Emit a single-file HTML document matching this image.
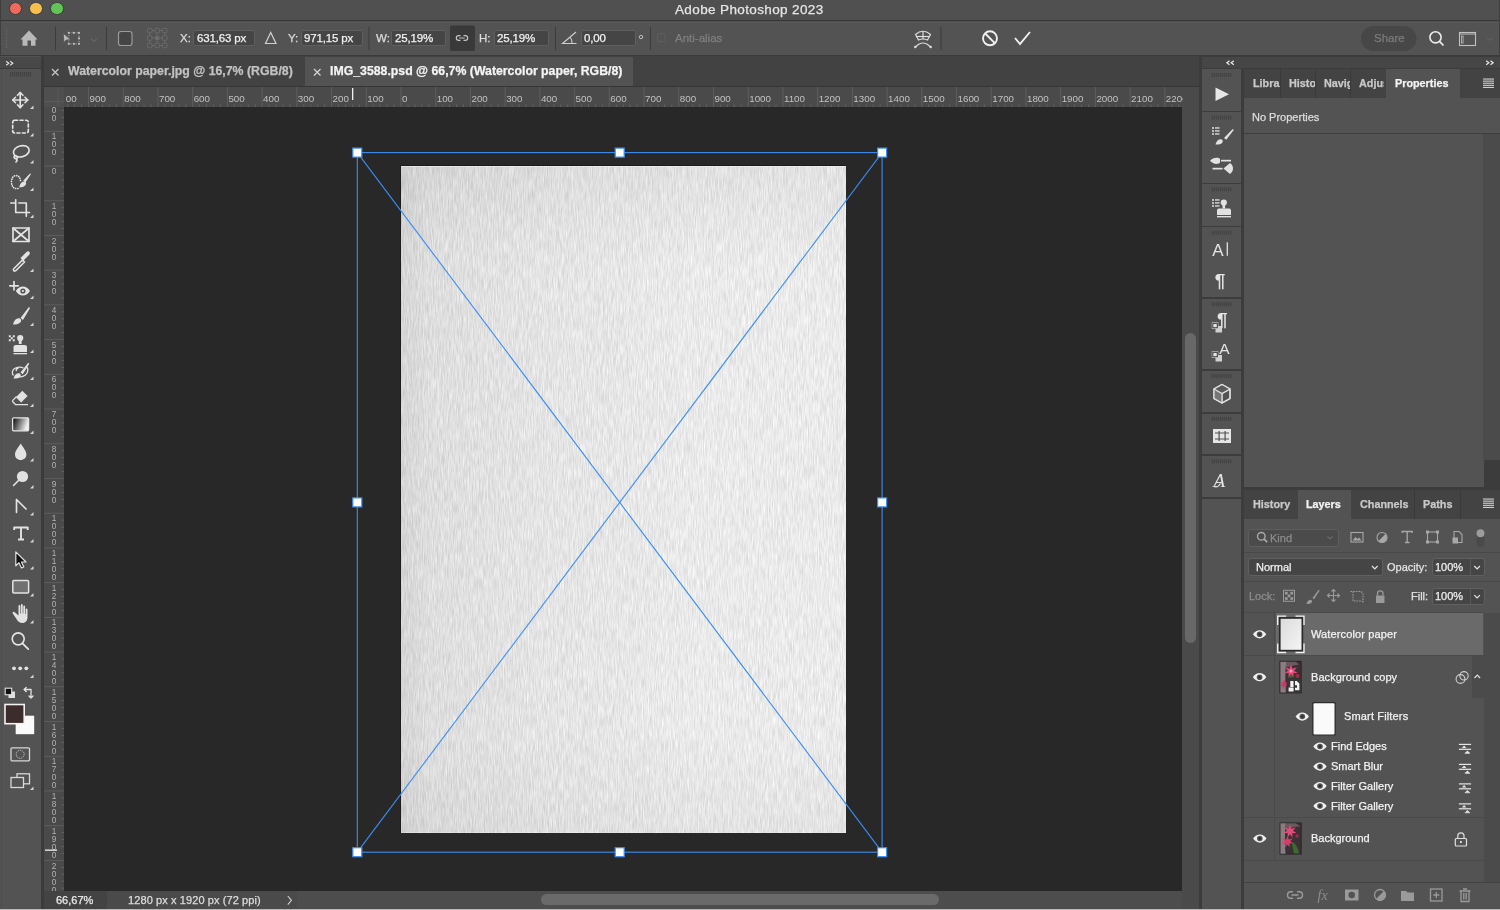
<!DOCTYPE html>
<html><head><meta charset="utf-8">
<style>
*{box-sizing:border-box}
html,body{margin:0;padding:0}
body{width:1500px;height:910px;position:relative;overflow:hidden;background:#535353;font-family:"Liberation Sans",sans-serif;color:#e8e8e8}
.a{position:absolute}
.t{position:absolute;white-space:nowrap;line-height:1;-webkit-text-stroke:0.25px currentColor;will-change:transform}
svg{position:absolute;overflow:visible;will-change:transform}
.inp{position:absolute;background:#454545;border:1px solid #5f5f5f;border-radius:2px}
.sep{position:absolute;width:1px;background:#3e3e3e}
</style></head><body>
<!-- title bar -->
<div class="a" style="left:0;top:0;width:1500px;height:21px;background:#505050;border-bottom:1px solid #353535"></div>
<div class="a" style="left:8.9px;top:1.9px;width:13.6px;height:13.6px;border-radius:50%;background:#ec6a5e;border:0.8px solid #3c3c3c"></div>
<div class="a" style="left:29.4px;top:1.9px;width:13.6px;height:13.6px;border-radius:50%;background:#f4bf4f;border:0.8px solid #3c3c3c"></div>
<div class="a" style="left:50.4px;top:1.9px;width:13.6px;height:13.6px;border-radius:50%;background:#61c554;border:0.8px solid #3c3c3c"></div>
<div class="t" style="left:675px;top:3px;font-size:13.5px;color:#e6e6e6;letter-spacing:0.37px">Adobe Photoshop 2023</div>
<!-- options bar -->
<div class="a" style="left:0;top:21px;width:1500px;height:35px;background:#535353;border-bottom:1px solid #3a3a3a"></div>
<!-- options bar content -->
<div class="a" style="left:0;top:0;width:1px;height:56px;background:#3e3e3e"></div>
<div class="a" style="left:1499px;top:0;width:1px;height:56px;background:#3e3e3e"></div>
<div class="a" style="left:1px;top:22px;width:1498px;height:1px;background:#585858"></div>
<svg style="left:0;top:21px" width="1500" height="35" viewBox="0 21 1500 35">
 <g fill="#5e5e5e"><rect x="5.5" y="28" width="2" height="20"/></g>
 <g stroke="#4a4a4a" stroke-width="0.6"><line x1="5" y1="30" x2="8" y2="30"/><line x1="5" y1="33" x2="8" y2="33"/><line x1="5" y1="36" x2="8" y2="36"/><line x1="5" y1="39" x2="8" y2="39"/><line x1="5" y1="42" x2="8" y2="42"/><line x1="5" y1="45" x2="8" y2="45"/></g>
 <!-- home -->
 <path d="M29 30.5 L20.5 39.5 L22.5 39.5 L22.5 45.8 L27.5 45.8 L27.5 40.5 L31 40.5 L31 45.8 L35.5 45.8 L35.5 39.5 L37.5 39.5 Z" fill="#b9b9b9"/>
 <rect x="55" y="26.5" width="1" height="24" fill="#3c3c3c"/>
 <!-- marquee transform icon -->
 <rect x="68.8" y="32.8" width="10.2" height="11" fill="none" stroke="#a8a8a8" stroke-width="0.9" stroke-dasharray="1.3 1.3"/>
 <g fill="#c0c0c0"><circle cx="68.8" cy="32.8" r="1.1"/><circle cx="73.9" cy="32.8" r="1.1"/><circle cx="79" cy="32.8" r="1.1"/><circle cx="79" cy="38.3" r="1.1"/><circle cx="68.8" cy="43.8" r="1.1"/><circle cx="73.9" cy="43.8" r="1.1"/><circle cx="79" cy="43.8" r="1.1"/></g>
 <path d="M63.3 33.3 L63.8 42.5 L66.3 40 L70.8 39.8 Z" fill="#b8b8b8" stroke="#535353" stroke-width="0.8"/>
 <path d="M91 38.5 L94 41.5 L97 38.5" fill="none" stroke="#727272" stroke-width="1"/>
 <rect x="106" y="26.5" width="1" height="24" fill="#3c3c3c"/>
 <!-- checkbox -->
 <rect x="118.5" y="31.5" width="13.5" height="14" rx="2.5" fill="#454545" stroke="#9a9a9a" stroke-width="1.2"/>
 <!-- reference grid -->
 <g fill="none" stroke="#6a6a6a" stroke-width="1">
  <path d="M152 30.5h3M159.5 30.5h3M152 38h3M159.5 38h3M152 45.5h3M159.5 45.5h3M149.7 33v2.5M149.7 40.5v2.5M157.2 33v2.5M157.2 40.5v2.5M164.7 33v2.5M164.7 40.5v2.5"/>
  <rect x="147.5" y="28.3" width="4.5" height="4.5" rx="1"/><rect x="155" y="28.3" width="4.5" height="4.5" rx="1"/><rect x="162.5" y="28.3" width="4.5" height="4.5" rx="1"/>
  <rect x="147.5" y="35.8" width="4.5" height="4.5" rx="1"/><rect x="162.5" y="35.8" width="4.5" height="4.5" rx="1"/>
  <rect x="147.5" y="43.3" width="4.5" height="4.5" rx="1"/><rect x="155" y="43.3" width="4.5" height="4.5" rx="1"/><rect x="162.5" y="43.3" width="4.5" height="4.5" rx="1"/>
 </g>
 <rect x="155" y="35.8" width="4.5" height="4.5" rx="1" fill="#6a6a6a"/>
 <!-- triangle delta -->
 <path d="M270.7 32.5 L265.5 43.5 L276 43.5 Z" fill="none" stroke="#d0d0d0" stroke-width="1.2"/>
 <rect x="368.5" y="27" width="1" height="23" fill="#3c3c3c"/>
 <!-- link button -->
 <rect x="450" y="25.5" width="25" height="25.5" rx="1.5" fill="#393939"/>
 <path d="M460.5 35.6h-1.8a2.4 2.4 0 0 0 0 4.8h1.8M463.5 35.6h1.8a2.4 2.4 0 0 1 0 4.8h-1.8M459.3 38h5.4" fill="none" stroke="#c4c4c4" stroke-width="1.2"/>
 <rect x="555" y="27" width="1" height="23" fill="#3c3c3c"/>
 <!-- angle icon -->
 <path d="M576 32 L562.5 43.5 L576.5 43.5 M570 37 Q572.5 40 572 43.5" fill="none" stroke="#cfcfcf" stroke-width="1.1"/>
 <circle cx="641" cy="37" r="1.7" fill="none" stroke="#bdbdbd" stroke-width="1"/>
 <rect x="650" y="27" width="1" height="23" fill="#3c3c3c"/>
 <rect x="657.5" y="33.5" width="7.5" height="8" rx="1.5" fill="none" stroke="#5f5f5f" stroke-width="1"/>
 <!-- warp icon -->
 <g fill="none" stroke="#dedede" stroke-width="1.2">
  <path d="M915.5 34.5 Q923 28 930.5 34.5 L927.5 40 Q923 38 918.5 40 Z"/>
  <line x1="923" y1="31.5" x2="923" y2="39"/><line x1="916.5" y1="36.5" x2="929.5" y2="36.5"/>
  <path d="M915.5 47 Q923 39 930.5 47"/>
 </g>
 <circle cx="915.3" cy="47" r="1.2" fill="#dedede"/><circle cx="930.7" cy="47" r="1.2" fill="#dedede"/>
 <rect x="940.5" y="27" width="1" height="23" fill="#3c3c3c"/>
 <!-- cancel -->
 <circle cx="990" cy="38.3" r="7" fill="none" stroke="#f0f0f0" stroke-width="1.9"/>
 <line x1="985.2" y1="33.5" x2="994.8" y2="43.1" stroke="#f0f0f0" stroke-width="1.9"/>
 <!-- commit -->
 <path d="M1015 38 L1020 44 L1030 32" fill="none" stroke="#f0f0f0" stroke-width="1.9"/>
 <!-- share -->
 <rect x="1361" y="26" width="55.5" height="25" rx="12.5" fill="#474747"/>
 <!-- search -->
 <circle cx="1435.5" cy="37.3" r="5.6" fill="none" stroke="#ececec" stroke-width="1.6"/>
 <line x1="1439.5" y1="41.3" x2="1443.5" y2="45.5" stroke="#ececec" stroke-width="1.8"/>
 <!-- workspace -->
 <rect x="1459.5" y="32.5" width="16" height="13" fill="none" stroke="#c0c0c0" stroke-width="1.1"/>
 <line x1="1459.5" y1="34" x2="1475.5" y2="34" stroke="#c0c0c0" stroke-width="1"/>
 <rect x="1461.5" y="36" width="1.6" height="7" fill="none" stroke="#c0c0c0" stroke-width="0.8"/>
 <path d="M1487 37.5 L1490 40.5 L1493 37.5" fill="none" stroke="#686868" stroke-width="1"/>
</svg>
<div class="inp" style="left:193px;top:30px;width:62px;height:16px"></div>
<div class="inp" style="left:300.5px;top:30px;width:62px;height:16px"></div>
<div class="inp" style="left:391px;top:30px;width:54.5px;height:16px"></div>
<div class="inp" style="left:493.5px;top:30px;width:55px;height:16px"></div>
<div class="inp" style="left:580.5px;top:30px;width:55px;height:16px"></div>
<div class="t" style="left:179.5px;top:33px;font-size:11.5px;color:#dcdcdc">X:</div>
<div class="t" style="left:196.5px;top:33px;font-size:11.5px;color:#f2f2f2;letter-spacing:-0.15px">631,63 px</div>
<div class="t" style="left:287.5px;top:33px;font-size:11.5px;color:#dcdcdc">Y:</div>
<div class="t" style="left:303.5px;top:33px;font-size:11.5px;color:#f2f2f2;letter-spacing:-0.15px">971,15 px</div>
<div class="t" style="left:375.5px;top:33px;font-size:11.5px;color:#dcdcdc">W:</div>
<div class="t" style="left:394.5px;top:33px;font-size:11.5px;color:#f2f2f2;letter-spacing:-0.15px">25,19%</div>
<div class="t" style="left:479px;top:33px;font-size:11.5px;color:#dcdcdc">H:</div>
<div class="t" style="left:497px;top:33px;font-size:11.5px;color:#f2f2f2;letter-spacing:-0.15px">25,19%</div>
<div class="t" style="left:584px;top:33px;font-size:11.5px;color:#f2f2f2;letter-spacing:-0.15px">0,00</div>
<div class="t" style="left:675px;top:33px;font-size:11.5px;color:#7f7f7f">Anti-alias</div>
<div class="t" style="left:1374px;top:33px;font-size:11.5px;color:#7b7b7b">Share</div>
<!-- left toolbar -->
<div class="a" style="left:0;top:56px;width:40.5px;height:854px;background:#535353"></div>
<div class="a" style="left:0;top:57px;width:40.5px;height:11.5px;background:#484848;border-bottom:1px solid #3c3c3c"></div>
<div class="a" style="left:40.5px;top:56px;width:3.2px;height:854px;background:#3b3b3b"></div>
<!-- tab bar -->
<div class="a" style="left:43.5px;top:56px;width:1156px;height:30.5px;background:#424242;border-bottom:1px solid #363636"></div>
<div class="a" style="left:305px;top:57px;width:328px;height:29px;background:#535353"></div>
<svg style="left:51px;top:67.5px" width="10" height="10"><path d="M1 1L7.5 7.5M7.5 1L1 7.5" stroke="#c4c4c4" stroke-width="1.25"/></svg>
<div class="t" style="left:68px;top:65px;font-size:12.3px;font-weight:bold;color:#c2c2c2">Watercolor paper.jpg @ 16,7% (RGB/8)</div>
<svg style="left:313px;top:67.5px" width="10" height="10"><path d="M1 1L7.5 7.5M7.5 1L1 7.5" stroke="#d4d4d4" stroke-width="1.25"/></svg>
<div class="t" style="left:330px;top:65px;font-size:12.3px;font-weight:bold;color:#f4f4f4">IMG_3588.psd @ 66,7% (Watercolor paper, RGB/8)</div>
<!-- rulers -->
<div class="a" style="left:43.5px;top:86.5px;width:1156px;height:20px;background:#4a4a4a"></div>
<div class="a" style="left:43.5px;top:106.5px;width:20px;height:785px;background:#4a4a4a"></div>
<svg style="left:63.5px;top:86.5px;overflow:hidden" width="1119" height="20"><g font-family="Liberation Sans" font-size="9.8" fill="#c2c2c2"><rect x="-10.70" y="0" width="1" height="20" fill="#5e5e5e"/><text x="1.70" y="15.1">00</text><rect x="24.02" y="0" width="1" height="20" fill="#5e5e5e"/><text x="25.52" y="15.1">900</text><rect x="58.74" y="0" width="1" height="20" fill="#5e5e5e"/><text x="60.24" y="15.1">800</text><rect x="93.46" y="0" width="1" height="20" fill="#5e5e5e"/><text x="94.96" y="15.1">700</text><rect x="128.18" y="0" width="1" height="20" fill="#5e5e5e"/><text x="129.68" y="15.1">600</text><rect x="162.90" y="0" width="1" height="20" fill="#5e5e5e"/><text x="164.40" y="15.1">500</text><rect x="197.62" y="0" width="1" height="20" fill="#5e5e5e"/><text x="199.12" y="15.1">400</text><rect x="232.34" y="0" width="1" height="20" fill="#5e5e5e"/><text x="233.84" y="15.1">300</text><rect x="267.06" y="0" width="1" height="20" fill="#5e5e5e"/><text x="268.56" y="15.1">200</text><rect x="301.78" y="0" width="1" height="20" fill="#5e5e5e"/><text x="303.28" y="15.1">100</text><rect x="336.50" y="0" width="1" height="20" fill="#5e5e5e"/><text x="338.00" y="15.1">0</text><rect x="371.22" y="0" width="1" height="20" fill="#5e5e5e"/><text x="372.72" y="15.1">100</text><rect x="405.94" y="0" width="1" height="20" fill="#5e5e5e"/><text x="407.44" y="15.1">200</text><rect x="440.66" y="0" width="1" height="20" fill="#5e5e5e"/><text x="442.16" y="15.1">300</text><rect x="475.38" y="0" width="1" height="20" fill="#5e5e5e"/><text x="476.88" y="15.1">400</text><rect x="510.10" y="0" width="1" height="20" fill="#5e5e5e"/><text x="511.60" y="15.1">500</text><rect x="544.82" y="0" width="1" height="20" fill="#5e5e5e"/><text x="546.32" y="15.1">600</text><rect x="579.54" y="0" width="1" height="20" fill="#5e5e5e"/><text x="581.04" y="15.1">700</text><rect x="614.26" y="0" width="1" height="20" fill="#5e5e5e"/><text x="615.76" y="15.1">800</text><rect x="648.98" y="0" width="1" height="20" fill="#5e5e5e"/><text x="650.48" y="15.1">900</text><rect x="683.70" y="0" width="1" height="20" fill="#5e5e5e"/><text x="685.20" y="15.1">1000</text><rect x="718.42" y="0" width="1" height="20" fill="#5e5e5e"/><text x="719.92" y="15.1">1100</text><rect x="753.14" y="0" width="1" height="20" fill="#5e5e5e"/><text x="754.64" y="15.1">1200</text><rect x="787.86" y="0" width="1" height="20" fill="#5e5e5e"/><text x="789.36" y="15.1">1300</text><rect x="822.58" y="0" width="1" height="20" fill="#5e5e5e"/><text x="824.08" y="15.1">1400</text><rect x="857.30" y="0" width="1" height="20" fill="#5e5e5e"/><text x="858.80" y="15.1">1500</text><rect x="892.02" y="0" width="1" height="20" fill="#5e5e5e"/><text x="893.52" y="15.1">1600</text><rect x="926.74" y="0" width="1" height="20" fill="#5e5e5e"/><text x="928.24" y="15.1">1700</text><rect x="961.46" y="0" width="1" height="20" fill="#5e5e5e"/><text x="962.96" y="15.1">1800</text><rect x="996.18" y="0" width="1" height="20" fill="#5e5e5e"/><text x="997.68" y="15.1">1900</text><rect x="1030.90" y="0" width="1" height="20" fill="#5e5e5e"/><text x="1032.40" y="15.1">2000</text><rect x="1065.62" y="0" width="1" height="20" fill="#5e5e5e"/><text x="1067.12" y="15.1">2100</text><rect x="1100.34" y="0" width="1" height="20" fill="#5e5e5e"/><text x="1101.84" y="15.1">2200</text><rect x="3.19" y="17.5" width="1" height="2.5" fill="#636363"/><rect x="10.13" y="17.5" width="1" height="2.5" fill="#636363"/><rect x="17.08" y="17.5" width="1" height="2.5" fill="#636363"/><rect x="30.96" y="17.5" width="1" height="2.5" fill="#636363"/><rect x="37.91" y="17.5" width="1" height="2.5" fill="#636363"/><rect x="44.85" y="17.5" width="1" height="2.5" fill="#636363"/><rect x="51.80" y="17.5" width="1" height="2.5" fill="#636363"/><rect x="65.68" y="17.5" width="1" height="2.5" fill="#636363"/><rect x="72.63" y="17.5" width="1" height="2.5" fill="#636363"/><rect x="79.57" y="17.5" width="1" height="2.5" fill="#636363"/><rect x="86.52" y="17.5" width="1" height="2.5" fill="#636363"/><rect x="100.40" y="17.5" width="1" height="2.5" fill="#636363"/><rect x="107.35" y="17.5" width="1" height="2.5" fill="#636363"/><rect x="114.29" y="17.5" width="1" height="2.5" fill="#636363"/><rect x="121.24" y="17.5" width="1" height="2.5" fill="#636363"/><rect x="135.12" y="17.5" width="1" height="2.5" fill="#636363"/><rect x="142.07" y="17.5" width="1" height="2.5" fill="#636363"/><rect x="149.01" y="17.5" width="1" height="2.5" fill="#636363"/><rect x="155.96" y="17.5" width="1" height="2.5" fill="#636363"/><rect x="169.84" y="17.5" width="1" height="2.5" fill="#636363"/><rect x="176.79" y="17.5" width="1" height="2.5" fill="#636363"/><rect x="183.73" y="17.5" width="1" height="2.5" fill="#636363"/><rect x="190.68" y="17.5" width="1" height="2.5" fill="#636363"/><rect x="204.56" y="17.5" width="1" height="2.5" fill="#636363"/><rect x="211.51" y="17.5" width="1" height="2.5" fill="#636363"/><rect x="218.45" y="17.5" width="1" height="2.5" fill="#636363"/><rect x="225.40" y="17.5" width="1" height="2.5" fill="#636363"/><rect x="239.28" y="17.5" width="1" height="2.5" fill="#636363"/><rect x="246.23" y="17.5" width="1" height="2.5" fill="#636363"/><rect x="253.17" y="17.5" width="1" height="2.5" fill="#636363"/><rect x="260.12" y="17.5" width="1" height="2.5" fill="#636363"/><rect x="274.00" y="17.5" width="1" height="2.5" fill="#636363"/><rect x="280.95" y="17.5" width="1" height="2.5" fill="#636363"/><rect x="287.89" y="17.5" width="1" height="2.5" fill="#636363"/><rect x="294.84" y="17.5" width="1" height="2.5" fill="#636363"/><rect x="308.72" y="17.5" width="1" height="2.5" fill="#636363"/><rect x="315.67" y="17.5" width="1" height="2.5" fill="#636363"/><rect x="322.61" y="17.5" width="1" height="2.5" fill="#636363"/><rect x="329.56" y="17.5" width="1" height="2.5" fill="#636363"/><rect x="343.44" y="17.5" width="1" height="2.5" fill="#636363"/><rect x="350.39" y="17.5" width="1" height="2.5" fill="#636363"/><rect x="357.33" y="17.5" width="1" height="2.5" fill="#636363"/><rect x="364.28" y="17.5" width="1" height="2.5" fill="#636363"/><rect x="378.16" y="17.5" width="1" height="2.5" fill="#636363"/><rect x="385.11" y="17.5" width="1" height="2.5" fill="#636363"/><rect x="392.05" y="17.5" width="1" height="2.5" fill="#636363"/><rect x="399.00" y="17.5" width="1" height="2.5" fill="#636363"/><rect x="412.88" y="17.5" width="1" height="2.5" fill="#636363"/><rect x="419.83" y="17.5" width="1" height="2.5" fill="#636363"/><rect x="426.77" y="17.5" width="1" height="2.5" fill="#636363"/><rect x="433.72" y="17.5" width="1" height="2.5" fill="#636363"/><rect x="447.60" y="17.5" width="1" height="2.5" fill="#636363"/><rect x="454.55" y="17.5" width="1" height="2.5" fill="#636363"/><rect x="461.49" y="17.5" width="1" height="2.5" fill="#636363"/><rect x="468.44" y="17.5" width="1" height="2.5" fill="#636363"/><rect x="482.32" y="17.5" width="1" height="2.5" fill="#636363"/><rect x="489.27" y="17.5" width="1" height="2.5" fill="#636363"/><rect x="496.21" y="17.5" width="1" height="2.5" fill="#636363"/><rect x="503.16" y="17.5" width="1" height="2.5" fill="#636363"/><rect x="517.04" y="17.5" width="1" height="2.5" fill="#636363"/><rect x="523.99" y="17.5" width="1" height="2.5" fill="#636363"/><rect x="530.93" y="17.5" width="1" height="2.5" fill="#636363"/><rect x="537.88" y="17.5" width="1" height="2.5" fill="#636363"/><rect x="551.76" y="17.5" width="1" height="2.5" fill="#636363"/><rect x="558.71" y="17.5" width="1" height="2.5" fill="#636363"/><rect x="565.65" y="17.5" width="1" height="2.5" fill="#636363"/><rect x="572.60" y="17.5" width="1" height="2.5" fill="#636363"/><rect x="586.48" y="17.5" width="1" height="2.5" fill="#636363"/><rect x="593.43" y="17.5" width="1" height="2.5" fill="#636363"/><rect x="600.37" y="17.5" width="1" height="2.5" fill="#636363"/><rect x="607.32" y="17.5" width="1" height="2.5" fill="#636363"/><rect x="621.20" y="17.5" width="1" height="2.5" fill="#636363"/><rect x="628.15" y="17.5" width="1" height="2.5" fill="#636363"/><rect x="635.09" y="17.5" width="1" height="2.5" fill="#636363"/><rect x="642.04" y="17.5" width="1" height="2.5" fill="#636363"/><rect x="655.92" y="17.5" width="1" height="2.5" fill="#636363"/><rect x="662.87" y="17.5" width="1" height="2.5" fill="#636363"/><rect x="669.81" y="17.5" width="1" height="2.5" fill="#636363"/><rect x="676.76" y="17.5" width="1" height="2.5" fill="#636363"/><rect x="690.64" y="17.5" width="1" height="2.5" fill="#636363"/><rect x="697.59" y="17.5" width="1" height="2.5" fill="#636363"/><rect x="704.53" y="17.5" width="1" height="2.5" fill="#636363"/><rect x="711.48" y="17.5" width="1" height="2.5" fill="#636363"/><rect x="725.36" y="17.5" width="1" height="2.5" fill="#636363"/><rect x="732.31" y="17.5" width="1" height="2.5" fill="#636363"/><rect x="739.25" y="17.5" width="1" height="2.5" fill="#636363"/><rect x="746.20" y="17.5" width="1" height="2.5" fill="#636363"/><rect x="760.08" y="17.5" width="1" height="2.5" fill="#636363"/><rect x="767.03" y="17.5" width="1" height="2.5" fill="#636363"/><rect x="773.97" y="17.5" width="1" height="2.5" fill="#636363"/><rect x="780.92" y="17.5" width="1" height="2.5" fill="#636363"/><rect x="794.80" y="17.5" width="1" height="2.5" fill="#636363"/><rect x="801.75" y="17.5" width="1" height="2.5" fill="#636363"/><rect x="808.69" y="17.5" width="1" height="2.5" fill="#636363"/><rect x="815.64" y="17.5" width="1" height="2.5" fill="#636363"/><rect x="829.52" y="17.5" width="1" height="2.5" fill="#636363"/><rect x="836.47" y="17.5" width="1" height="2.5" fill="#636363"/><rect x="843.41" y="17.5" width="1" height="2.5" fill="#636363"/><rect x="850.36" y="17.5" width="1" height="2.5" fill="#636363"/><rect x="864.24" y="17.5" width="1" height="2.5" fill="#636363"/><rect x="871.19" y="17.5" width="1" height="2.5" fill="#636363"/><rect x="878.13" y="17.5" width="1" height="2.5" fill="#636363"/><rect x="885.08" y="17.5" width="1" height="2.5" fill="#636363"/><rect x="898.96" y="17.5" width="1" height="2.5" fill="#636363"/><rect x="905.91" y="17.5" width="1" height="2.5" fill="#636363"/><rect x="912.85" y="17.5" width="1" height="2.5" fill="#636363"/><rect x="919.80" y="17.5" width="1" height="2.5" fill="#636363"/><rect x="933.68" y="17.5" width="1" height="2.5" fill="#636363"/><rect x="940.63" y="17.5" width="1" height="2.5" fill="#636363"/><rect x="947.57" y="17.5" width="1" height="2.5" fill="#636363"/><rect x="954.52" y="17.5" width="1" height="2.5" fill="#636363"/><rect x="968.40" y="17.5" width="1" height="2.5" fill="#636363"/><rect x="975.35" y="17.5" width="1" height="2.5" fill="#636363"/><rect x="982.29" y="17.5" width="1" height="2.5" fill="#636363"/><rect x="989.24" y="17.5" width="1" height="2.5" fill="#636363"/><rect x="1003.12" y="17.5" width="1" height="2.5" fill="#636363"/><rect x="1010.07" y="17.5" width="1" height="2.5" fill="#636363"/><rect x="1017.01" y="17.5" width="1" height="2.5" fill="#636363"/><rect x="1023.96" y="17.5" width="1" height="2.5" fill="#636363"/><rect x="1037.84" y="17.5" width="1" height="2.5" fill="#636363"/><rect x="1044.79" y="17.5" width="1" height="2.5" fill="#636363"/><rect x="1051.73" y="17.5" width="1" height="2.5" fill="#636363"/><rect x="1058.68" y="17.5" width="1" height="2.5" fill="#636363"/><rect x="1072.56" y="17.5" width="1" height="2.5" fill="#636363"/><rect x="1079.51" y="17.5" width="1" height="2.5" fill="#636363"/><rect x="1086.45" y="17.5" width="1" height="2.5" fill="#636363"/><rect x="1093.40" y="17.5" width="1" height="2.5" fill="#636363"/><rect x="1107.28" y="17.5" width="1" height="2.5" fill="#636363"/><rect x="1114.23" y="17.5" width="1" height="2.5" fill="#636363"/></g></svg>
<svg style="left:43.5px;top:106.5px;overflow:hidden" width="20" height="785"><g font-family="Liberation Sans" font-size="8.2" fill="#b4b4b4" text-anchor="middle"><rect x="0" y="-45.66" width="20" height="1" fill="#5e5e5e"/><text x="10" y="-37.06">3</text><text x="10" y="-29.06">0</text><text x="10" y="-21.06">0</text><rect x="0" y="-10.94" width="20" height="1" fill="#5e5e5e"/><text x="10" y="-2.34">2</text><text x="10" y="5.66">0</text><text x="10" y="13.66">0</text><rect x="0" y="23.78" width="20" height="1" fill="#5e5e5e"/><text x="10" y="32.38">1</text><text x="10" y="40.38">0</text><text x="10" y="48.38">0</text><rect x="0" y="58.50" width="20" height="1" fill="#5e5e5e"/><text x="10" y="67.10">0</text><rect x="0" y="93.22" width="20" height="1" fill="#5e5e5e"/><text x="10" y="101.82">1</text><text x="10" y="109.82">0</text><text x="10" y="117.82">0</text><rect x="0" y="127.94" width="20" height="1" fill="#5e5e5e"/><text x="10" y="136.54">2</text><text x="10" y="144.54">0</text><text x="10" y="152.54">0</text><rect x="0" y="162.66" width="20" height="1" fill="#5e5e5e"/><text x="10" y="171.26">3</text><text x="10" y="179.26">0</text><text x="10" y="187.26">0</text><rect x="0" y="197.38" width="20" height="1" fill="#5e5e5e"/><text x="10" y="205.98">4</text><text x="10" y="213.98">0</text><text x="10" y="221.98">0</text><rect x="0" y="232.10" width="20" height="1" fill="#5e5e5e"/><text x="10" y="240.70">5</text><text x="10" y="248.70">0</text><text x="10" y="256.70">0</text><rect x="0" y="266.82" width="20" height="1" fill="#5e5e5e"/><text x="10" y="275.42">6</text><text x="10" y="283.42">0</text><text x="10" y="291.42">0</text><rect x="0" y="301.54" width="20" height="1" fill="#5e5e5e"/><text x="10" y="310.14">7</text><text x="10" y="318.14">0</text><text x="10" y="326.14">0</text><rect x="0" y="336.26" width="20" height="1" fill="#5e5e5e"/><text x="10" y="344.86">8</text><text x="10" y="352.86">0</text><text x="10" y="360.86">0</text><rect x="0" y="370.98" width="20" height="1" fill="#5e5e5e"/><text x="10" y="379.58">9</text><text x="10" y="387.58">0</text><text x="10" y="395.58">0</text><rect x="0" y="405.70" width="20" height="1" fill="#5e5e5e"/><text x="10" y="414.30">1</text><text x="10" y="422.30">0</text><text x="10" y="430.30">0</text><text x="10" y="438.30">0</text><rect x="0" y="440.42" width="20" height="1" fill="#5e5e5e"/><text x="10" y="449.02">1</text><text x="10" y="457.02">1</text><text x="10" y="465.02">0</text><text x="10" y="473.02">0</text><rect x="0" y="475.14" width="20" height="1" fill="#5e5e5e"/><text x="10" y="483.74">1</text><text x="10" y="491.74">2</text><text x="10" y="499.74">0</text><text x="10" y="507.74">0</text><rect x="0" y="509.86" width="20" height="1" fill="#5e5e5e"/><text x="10" y="518.46">1</text><text x="10" y="526.46">3</text><text x="10" y="534.46">0</text><text x="10" y="542.46">0</text><rect x="0" y="544.58" width="20" height="1" fill="#5e5e5e"/><text x="10" y="553.18">1</text><text x="10" y="561.18">4</text><text x="10" y="569.18">0</text><text x="10" y="577.18">0</text><rect x="0" y="579.30" width="20" height="1" fill="#5e5e5e"/><text x="10" y="587.90">1</text><text x="10" y="595.90">5</text><text x="10" y="603.90">0</text><text x="10" y="611.90">0</text><rect x="0" y="614.02" width="20" height="1" fill="#5e5e5e"/><text x="10" y="622.62">1</text><text x="10" y="630.62">6</text><text x="10" y="638.62">0</text><text x="10" y="646.62">0</text><rect x="0" y="648.74" width="20" height="1" fill="#5e5e5e"/><text x="10" y="657.34">1</text><text x="10" y="665.34">7</text><text x="10" y="673.34">0</text><text x="10" y="681.34">0</text><rect x="0" y="683.46" width="20" height="1" fill="#5e5e5e"/><text x="10" y="692.06">1</text><text x="10" y="700.06">8</text><text x="10" y="708.06">0</text><text x="10" y="716.06">0</text><rect x="0" y="718.18" width="20" height="1" fill="#5e5e5e"/><text x="10" y="726.78">1</text><text x="10" y="734.78">9</text><text x="10" y="742.78">0</text><text x="10" y="750.78">0</text><rect x="0" y="752.90" width="20" height="1" fill="#5e5e5e"/><text x="10" y="761.50">2</text><text x="10" y="769.50">0</text><text x="10" y="777.50">0</text><text x="10" y="785.50">0</text><rect x="17.5" y="2.95" width="2.5" height="1" fill="#636363"/><rect x="17.5" y="9.89" width="2.5" height="1" fill="#636363"/><rect x="17.5" y="16.84" width="2.5" height="1" fill="#636363"/><rect x="17.5" y="30.72" width="2.5" height="1" fill="#636363"/><rect x="17.5" y="37.67" width="2.5" height="1" fill="#636363"/><rect x="17.5" y="44.61" width="2.5" height="1" fill="#636363"/><rect x="17.5" y="51.56" width="2.5" height="1" fill="#636363"/><rect x="17.5" y="65.44" width="2.5" height="1" fill="#636363"/><rect x="17.5" y="72.39" width="2.5" height="1" fill="#636363"/><rect x="17.5" y="79.33" width="2.5" height="1" fill="#636363"/><rect x="17.5" y="86.28" width="2.5" height="1" fill="#636363"/><rect x="17.5" y="100.16" width="2.5" height="1" fill="#636363"/><rect x="17.5" y="107.11" width="2.5" height="1" fill="#636363"/><rect x="17.5" y="114.05" width="2.5" height="1" fill="#636363"/><rect x="17.5" y="121.00" width="2.5" height="1" fill="#636363"/><rect x="17.5" y="134.88" width="2.5" height="1" fill="#636363"/><rect x="17.5" y="141.83" width="2.5" height="1" fill="#636363"/><rect x="17.5" y="148.77" width="2.5" height="1" fill="#636363"/><rect x="17.5" y="155.72" width="2.5" height="1" fill="#636363"/><rect x="17.5" y="169.60" width="2.5" height="1" fill="#636363"/><rect x="17.5" y="176.55" width="2.5" height="1" fill="#636363"/><rect x="17.5" y="183.49" width="2.5" height="1" fill="#636363"/><rect x="17.5" y="190.44" width="2.5" height="1" fill="#636363"/><rect x="17.5" y="204.32" width="2.5" height="1" fill="#636363"/><rect x="17.5" y="211.27" width="2.5" height="1" fill="#636363"/><rect x="17.5" y="218.21" width="2.5" height="1" fill="#636363"/><rect x="17.5" y="225.16" width="2.5" height="1" fill="#636363"/><rect x="17.5" y="239.04" width="2.5" height="1" fill="#636363"/><rect x="17.5" y="245.99" width="2.5" height="1" fill="#636363"/><rect x="17.5" y="252.93" width="2.5" height="1" fill="#636363"/><rect x="17.5" y="259.88" width="2.5" height="1" fill="#636363"/><rect x="17.5" y="273.76" width="2.5" height="1" fill="#636363"/><rect x="17.5" y="280.71" width="2.5" height="1" fill="#636363"/><rect x="17.5" y="287.65" width="2.5" height="1" fill="#636363"/><rect x="17.5" y="294.60" width="2.5" height="1" fill="#636363"/><rect x="17.5" y="308.48" width="2.5" height="1" fill="#636363"/><rect x="17.5" y="315.43" width="2.5" height="1" fill="#636363"/><rect x="17.5" y="322.37" width="2.5" height="1" fill="#636363"/><rect x="17.5" y="329.32" width="2.5" height="1" fill="#636363"/><rect x="17.5" y="343.20" width="2.5" height="1" fill="#636363"/><rect x="17.5" y="350.15" width="2.5" height="1" fill="#636363"/><rect x="17.5" y="357.09" width="2.5" height="1" fill="#636363"/><rect x="17.5" y="364.04" width="2.5" height="1" fill="#636363"/><rect x="17.5" y="377.92" width="2.5" height="1" fill="#636363"/><rect x="17.5" y="384.87" width="2.5" height="1" fill="#636363"/><rect x="17.5" y="391.81" width="2.5" height="1" fill="#636363"/><rect x="17.5" y="398.76" width="2.5" height="1" fill="#636363"/><rect x="17.5" y="412.64" width="2.5" height="1" fill="#636363"/><rect x="17.5" y="419.59" width="2.5" height="1" fill="#636363"/><rect x="17.5" y="426.53" width="2.5" height="1" fill="#636363"/><rect x="17.5" y="433.48" width="2.5" height="1" fill="#636363"/><rect x="17.5" y="447.36" width="2.5" height="1" fill="#636363"/><rect x="17.5" y="454.31" width="2.5" height="1" fill="#636363"/><rect x="17.5" y="461.25" width="2.5" height="1" fill="#636363"/><rect x="17.5" y="468.20" width="2.5" height="1" fill="#636363"/><rect x="17.5" y="482.08" width="2.5" height="1" fill="#636363"/><rect x="17.5" y="489.03" width="2.5" height="1" fill="#636363"/><rect x="17.5" y="495.97" width="2.5" height="1" fill="#636363"/><rect x="17.5" y="502.92" width="2.5" height="1" fill="#636363"/><rect x="17.5" y="516.80" width="2.5" height="1" fill="#636363"/><rect x="17.5" y="523.75" width="2.5" height="1" fill="#636363"/><rect x="17.5" y="530.69" width="2.5" height="1" fill="#636363"/><rect x="17.5" y="537.64" width="2.5" height="1" fill="#636363"/><rect x="17.5" y="551.52" width="2.5" height="1" fill="#636363"/><rect x="17.5" y="558.47" width="2.5" height="1" fill="#636363"/><rect x="17.5" y="565.41" width="2.5" height="1" fill="#636363"/><rect x="17.5" y="572.36" width="2.5" height="1" fill="#636363"/><rect x="17.5" y="586.24" width="2.5" height="1" fill="#636363"/><rect x="17.5" y="593.19" width="2.5" height="1" fill="#636363"/><rect x="17.5" y="600.13" width="2.5" height="1" fill="#636363"/><rect x="17.5" y="607.08" width="2.5" height="1" fill="#636363"/><rect x="17.5" y="620.96" width="2.5" height="1" fill="#636363"/><rect x="17.5" y="627.91" width="2.5" height="1" fill="#636363"/><rect x="17.5" y="634.85" width="2.5" height="1" fill="#636363"/><rect x="17.5" y="641.80" width="2.5" height="1" fill="#636363"/><rect x="17.5" y="655.68" width="2.5" height="1" fill="#636363"/><rect x="17.5" y="662.63" width="2.5" height="1" fill="#636363"/><rect x="17.5" y="669.57" width="2.5" height="1" fill="#636363"/><rect x="17.5" y="676.52" width="2.5" height="1" fill="#636363"/><rect x="17.5" y="690.40" width="2.5" height="1" fill="#636363"/><rect x="17.5" y="697.35" width="2.5" height="1" fill="#636363"/><rect x="17.5" y="704.29" width="2.5" height="1" fill="#636363"/><rect x="17.5" y="711.24" width="2.5" height="1" fill="#636363"/><rect x="17.5" y="725.12" width="2.5" height="1" fill="#636363"/><rect x="17.5" y="732.07" width="2.5" height="1" fill="#636363"/><rect x="17.5" y="739.01" width="2.5" height="1" fill="#636363"/><rect x="17.5" y="745.96" width="2.5" height="1" fill="#636363"/><rect x="17.5" y="759.84" width="2.5" height="1" fill="#636363"/><rect x="17.5" y="766.79" width="2.5" height="1" fill="#636363"/><rect x="17.5" y="773.73" width="2.5" height="1" fill="#636363"/><rect x="17.5" y="780.68" width="2.5" height="1" fill="#636363"/></g></svg>
<svg style="left:43.5px;top:86.5px" width="20" height="20"><rect x="0" y="0" width="20" height="20" fill="#4f4f4f"/><rect x="13.5" y="0" width="1" height="20" fill="#5a5a5a"/><rect x="0" y="14" width="20" height="1" fill="#5a5a5a"/></svg>
<!-- canvas -->
<div class="a" style="left:63.5px;top:106.5px;width:1118.5px;height:784.5px;background:#282828"></div>
<!-- vertical scrollbar -->
<div class="a" style="left:1182px;top:106.5px;width:17px;height:784.5px;background:#4a4a4a"></div>
<div class="a" style="left:1185px;top:333px;width:11px;height:310px;border-radius:6px;background:#686868"></div>
<!-- status bar -->
<div class="a" style="left:43.5px;top:891px;width:1156px;height:17.5px;background:#4a4a4a"></div>
<div class="a" style="left:43.5px;top:891px;width:63px;height:17.5px;background:#434343"></div>
<div class="a" style="left:297px;top:891px;width:885px;height:17.5px;background:#4d4d4d"></div>
<div class="a" style="left:540.5px;top:894px;width:398.5px;height:10.5px;border-radius:5.5px;background:#6a6a6a"></div>
<div class="t" style="left:56px;top:894.5px;font-size:11px;color:#ececec">66,67%</div>
<div class="t" style="left:128px;top:894.5px;font-size:11px;color:#dedede;letter-spacing:0.1px">1280 px x 1920 px (72 ppi)</div>
<svg style="left:0;top:0" width="300" height="910"><path d="M287.8 896l3.6 4.3-3.6 4.3" fill="none" stroke="#cfcfcf" stroke-width="1.1"/></svg>
<div class="a" style="left:0;top:908.5px;width:1500px;height:1.5px;background:#b9b9b9"></div>
<!-- paper -->
<div class="a" style="left:399.5px;top:164.5px;width:446.5px;height:668.5px;background:#1c1c1c"></div>
<svg style="left:400.5px;top:165.5px;overflow:hidden" width="444.5" height="666.5">
 <defs>
  <filter id="pt" x="0" y="0" width="100%" height="100%" color-interpolation-filters="sRGB">
   <feTurbulence type="fractalNoise" baseFrequency="1.2 0.08" numOctaves="2" seed="5"/>
   <feColorMatrix type="matrix" values="0.2 0 0 0 0.815  0.2 0 0 0 0.815  0.2 0 0 0 0.815  0 0 0 0 1"/>
  </filter>
  <linearGradient id="pg" x1="0" y1="0" x2="1" y2="0">
   <stop offset="0" stop-color="#000" stop-opacity="0.09"/><stop offset="0.06" stop-color="#000" stop-opacity="0.05"/><stop offset="0.35" stop-color="#000" stop-opacity="0.02"/><stop offset="0.65" stop-color="#fff" stop-opacity="0.03"/><stop offset="1" stop-color="#fff" stop-opacity="0.05"/>
  </linearGradient>
  <linearGradient id="pg2" x1="0" y1="0" x2="0" y2="1">
   <stop offset="0" stop-color="#000" stop-opacity="0.04"/><stop offset="0.15" stop-color="#000" stop-opacity="0"/><stop offset="0.85" stop-color="#000" stop-opacity="0"/><stop offset="1" stop-color="#000" stop-opacity="0.03"/>
  </linearGradient>
 </defs>
 <rect width="444.5" height="666.5" fill="#fff" filter="url(#pt)"/>
 <rect width="444.5" height="666.5" fill="url(#pg)"/>
 <rect width="444.5" height="666.5" fill="url(#pg2)"/>
 <rect width="444.5" height="1" fill="#f0f0f0" opacity="0.6"/>
</svg>
<!-- transform box -->
<svg style="left:0;top:0" width="1500" height="910">
 <g stroke="#3d8cf0" stroke-width="1.1" fill="none">
  <rect x="357.3" y="152.6" width="524.8" height="699.6"/>
  <line x1="357.3" y1="152.6" x2="882.1" y2="852.2"/>
  <line x1="882.1" y1="152.6" x2="357.3" y2="852.2"/>
 </g>
 <g fill="#ffffff" stroke="#3d8cf0" stroke-width="1.2">
  <rect x="352.8" y="148.1" width="9" height="9"/><rect x="615.2" y="148.1" width="9" height="9"/><rect x="877.6" y="148.1" width="9" height="9"/>
  <rect x="352.8" y="497.9" width="9" height="9"/><rect x="877.6" y="497.9" width="9" height="9"/>
  <rect x="352.8" y="847.7" width="9" height="9"/><rect x="615.2" y="847.7" width="9" height="9"/><rect x="877.6" y="847.7" width="9" height="9"/>
 </g>
 <!-- ruler cursor markers -->
 <rect x="352" y="88" width="1.3" height="12" fill="#f0f0f0"/>
 <rect x="45" y="849.5" width="12" height="1.3" fill="#f0f0f0"/>
</svg>
<!-- toolbar icons -->
<div class="a" style="left:1px;top:68.8px;width:39px;height:840px;background:#535353;border-left:1px solid #4d4d4d"></div>
<svg style="left:0;top:0" width="42" height="910">
 <defs><pattern id="grip2" width="2" height="4.5" patternUnits="userSpaceOnUse"><rect width="1.1" height="4.5" fill="#444"/><rect x="1.1" width="0.9" height="4.5" fill="#4d4d4d"/></pattern></defs>
 <rect x="10" y="72" width="21" height="4.5" fill="url(#grip2)"/>
 <path d="M6.2 61.3l2.6 2L6.2 65.3M10.2 61.3l2.6 2-2.6 2" fill="none" stroke="#e0e0e0" stroke-width="1.2"/>
 <!-- corner triangles -->
 <g fill="#d8d8d8">
  <path d="M33.5 105.5v3.5h-3.5z"/><path d="M33.5 133v3.5h-3.5z"/><path d="M33.5 160v3.5h-3.5z"/><path d="M33.5 187.5v3.5h-3.5z"/>
  <path d="M33.5 214.5v3.5h-3.5z"/><path d="M33.5 268.5v3.5h-3.5z"/><path d="M33.5 295.5v3.5h-3.5z"/><path d="M33.5 322.5v3.5h-3.5z"/>
  <path d="M33.5 349.5v3.5h-3.5z"/><path d="M33.5 376.5v3.5h-3.5z"/><path d="M33.5 403.5v3.5h-3.5z"/><path d="M33.5 430.5v3.5h-3.5z"/>
  <path d="M33.5 458v3.5h-3.5z"/><path d="M33.5 485v3.5h-3.5z"/><path d="M33.5 512v3.5h-3.5z"/><path d="M33.5 539v3.5h-3.5z"/>
  <path d="M33.5 566v3.5h-3.5z"/><path d="M33.5 593v3.5h-3.5z"/><path d="M33.5 620v3.5h-3.5z"/><path d="M33.5 674.5v3.5h-3.5z"/>
  <path d="M33.5 786.5v3.5h-3.5z"/>
 </g>
 <g fill="none" stroke="#e4e4e4" stroke-width="1.65" stroke-linecap="round" stroke-linejoin="round">
  <!-- move -->
  <path d="M20.2 92.5v15M12.8 100h15"/>
  <path d="M17.5 95.3l2.7-2.8 2.7 2.8M17.5 104.8l2.7 2.8 2.7-2.8M15.5 97.3l-2.7 2.7 2.7 2.7M25 97.3l2.7 2.7-2.7 2.7" stroke-width="1.6"/>
  <!-- marquee -->
  <rect x="12.7" y="120.2" width="15.6" height="12.8" rx="2" stroke-dasharray="3 2.4"/>
  <!-- lasso -->
  <ellipse cx="21.3" cy="151.3" rx="8" ry="5.5" transform="rotate(-15 21.3 151.3)"/>
  <path d="M15 155.5c-2 1.5-0.5 3.5 1.5 3 1.5-.5 1-2.5-.5-2.5M16.3 158.5c.8 1 .8 2.5-.3 3.5"/>
  <!-- quick select dotted -->
  <path d="M20.5 180.5c-.5-3-2-5-4.5-5s-4.5 2.5-4.5 6.5 2 6.5 4.5 6.5h2" stroke-dasharray="0.1 2.1" stroke-width="1.7"/>
  <!-- crop -->
  <path d="M10.8 203h3.5M15.7 199.7v12.8h12M18.8 203h7.5v12.5M26.3 215.5v.8M28 212.5h1.5"/>
  <!-- frame -->
  <rect x="13" y="228" width="16" height="13.5"/><path d="M13 228l16 13.5M29 228l-16 13.5"/>
  <!-- eyedropper -->
  <path d="M14 268.5l8.5-8.5 2 2-8.5 8.5c-1 1-2.5.5-2.5-.5s-.5-.5.5-1.5z"/>
  <!-- spot heal plus -->
  <path d="M14 281.5v8.5M9.8 285.8h8.5"/>
  <path d="M16.8 291c3.3-4.8 8.8-4.8 12.2 0-3.3 4.8-8.8 4.8-12.2 0z" fill="#e4e4e4"/>
  <!-- zoom -->
  <circle cx="18.2" cy="638.8" r="6"/><path d="M22.5 643.3l5.8 5.8" stroke-width="1.8"/>
  <!-- pen -->
  <path d="M16.5 499.5v13M16.5 499.5l9.5 9.5"/>
  <!-- swap arrows -->
  <path d="M24 689.5h7v8.5M24 689.5l2.2-2M24 689.5l2.2 2M31 698l-2-2M31 698l2-2" stroke-width="1.3"/>
 </g>
 <g fill="#e2e2e2">
  <!-- quick select brush -->
  <path d="M30 173.5l-6.8 7.3 2.2 1.8 5.3-8.2c.3-.7-.3-1.2-.7-.9z"/>
  <path d="M19.2 187.5c.6-3 2-5.8 4.8-6 2-.1 2.8 2 1.6 3.5-1.6 2-4 2.3-6.4 2.5z"/>
  <!-- eyedropper top -->
  <path d="M20.5 258l6-6c1-1 2.5-1 3 0 .5 1 .5 2-.5 3l-6 6z"/>
  <!-- brush -->
  <path d="M28.5 307.5l-8 10.5 2.5 2 6.8-11.5c.3-1-.7-1.5-1.3-1z"/>
  <path d="M13 324.5c.8-3 2.2-6 5.5-6.3 2.3-.2 3.5 2.2 2 4-2 2.2-5 2.3-7.5 2.3z"/>
  <!-- stamp -->
  <circle cx="20.2" cy="338" r="3.1"/><rect x="18.8" y="339" width="2.8" height="5"/>
  <path d="M13.5 352h13.5v-4.8c0-1.5-1-2.2-2.5-2.2h-8.5c-1.5 0-2.5.7-2.5 2.2z"/>
  <rect x="13.5" y="353" width="13.5" height="1.3"/>
  <path d="M8.8 335.2h2v2h-2zM12.8 335.2h2v2h-2zM10.8 337.2h2v2h-2zM8.8 339.2h2v2h-2zM12.8 339.2h2v2h-2z"/>
  <!-- history brush -->
  <path d="M28 363l-7.5 9.5 2.3 1.8 6.3-10.3c.2-.8-.6-1.3-1.1-1z"/>
  <path d="M13.5 378.5c.7-2.5 2-5 5-5.3 2-.2 3 2 1.8 3.5-1.8 2-4.5 1.8-6.8 1.8z"/>
  <!-- eraser -->
  <path d="M22.3 390.8l5.3 5.3-6 6-5.3-5.3z"/>
  <!-- drop -->
  <path d="M20.7 443.5c-2.5 4-5.7 7.5-5.7 11 0 3.2 2.5 5.5 5.7 5.5s5.7-2.3 5.7-5.5c0-3.5-3.2-7-5.7-11z"/>
  <!-- dodge -->
  <circle cx="22.5" cy="476.5" r="5.6"/>
  <!-- hand -->
  <path d="M15 612.5c-1.2-1.5-3-.5-2.2 1l4 6c1.2 2 3 3.5 5.5 3.5 3.5 0 5.2-2.5 5.2-6v-7.5c0-1.2-1.8-1.2-1.8 0v4.5h-.6v-7.5c0-1.2-1.8-1.2-1.8 0v7h-.6v-8.5c0-1.2-1.8-1.2-1.8 0v8.5h-.6v-7.5c0-1.2-1.8-1.2-1.8 0v9.5z"/>
  <!-- more dots -->
  <circle cx="14" cy="668.3" r="1.9"/><circle cx="20.2" cy="668.3" r="1.9"/><circle cx="26.3" cy="668.3" r="1.9"/>
 </g>
 <g fill="none" stroke="#e2e2e2" stroke-width="1.3" stroke-linejoin="round">
  <path d="M13.5 375.5c-2-2-1.5-6 2-7.5 2.5-1 6-1 8-0M16.5 371c-1 -1.5 .5-3 2-2.5M26 366c2.5 2 2.5 6.5-.5 9-1.8 1.5-4 2-6 2.2"/>
  <!-- eraser outline -->
  <path d="M16.3 396.8l-3.3 3.3c-.6.6-.6 1.3 0 1.9l2.7 2.7h12.3"/>
  <path d="M16.3 396.8l5.3 5.3"/>
  <!-- dodge handle -->
  <path d="M13.5 485.5l5.5-5.5" stroke-width="1.6" stroke-linecap="round"/>
  <!-- type -->
  <path d="M14.2 530v-2.5h13.5v2.5M21 527.5v12M18 539.5h6" stroke-width="1.9"/>
  <!-- path select -->
  <path d="M15.8 551.8v14l3.2-3 2.5 5.2 2.3-1-2.3-5h4.5z" fill="#111" stroke-width="1.2"/>
  <!-- rect -->
  <rect x="12.8" y="580.5" width="15.8" height="12.5" rx="1" fill="#707070" stroke-width="1.5"/>
 </g>
 <circle cx="22.9" cy="291" r="2.6" fill="#535353"/><circle cx="22.9" cy="291" r="1.1" fill="#e4e4e4"/>
 <!-- gradient -->
 <defs><linearGradient id="gr" x1="0" y1="0" x2="1" y2="0.3"><stop offset="0" stop-color="#000"/><stop offset="1" stop-color="#f0f0f0"/></linearGradient></defs>
 <rect x="12.6" y="417.8" width="16" height="13" rx="1" fill="url(#gr)" stroke="#e6e6e6" stroke-width="1.3"/>
 <!-- small default colors -->
 <rect x="8.5" y="691.5" width="6.5" height="6.5" fill="#e0e0e0"/>
 <rect x="5.2" y="688.2" width="6.5" height="6.5" fill="#111" stroke="#e0e0e0" stroke-width="1.1"/>
 <!-- fg/bg swatches -->
 <rect x="15.2" y="715.2" width="19.5" height="19.5" fill="#fafafa" stroke="#3a3a3a" stroke-width="0.6"/>
 <rect x="5" y="704.5" width="19.2" height="19.2" fill="#3d2c2c" stroke="#f2f2f2" stroke-width="1.6"/>
 <!-- quick mask -->
 <rect x="11" y="747.8" width="18.5" height="13" rx="1" fill="none" stroke="#d8d8d8" stroke-width="1.3"/>
 <circle cx="20.2" cy="754.3" r="4" fill="none" stroke="#d8d8d8" stroke-width="1" stroke-dasharray="1 1"/>
 <!-- screen mode -->
 <g fill="#535353" stroke="#d8d8d8" stroke-width="1.3"><rect x="17" y="773.8" width="12.5" height="10"/><rect x="11" y="777.5" width="12.5" height="10"/></g>
</svg>
<!-- right dock -->
<div class="a" style="left:1199.2px;top:56px;width:300.8px;height:852.5px;background:#3c3c3c"></div>
<div class="a" style="left:1201.8px;top:56.5px;width:298.2px;height:11.8px;background:#464646"></div>
<svg style="left:0;top:0" width="1500" height="910">
 <path d="M1233.8 60.8l-2.6 2 2.6 2M1229.5 60.8l-2.6 2 2.6 2M1486.2 60.8l2.6 2-2.6 2M1490.5 60.8l2.6 2-2.6 2" fill="none" stroke="#e6e6e6" stroke-width="1.3"/>
</svg>
<!-- icon column groups -->
<div class="a" style="left:1202px;top:69.3px;width:38.6px;height:41.6px;background:#535353"></div>
<div class="a" style="left:1202px;top:112px;width:38.6px;height:70.6px;background:#535353"></div>
<div class="a" style="left:1202px;top:184px;width:38.6px;height:41.8px;background:#535353"></div>
<div class="a" style="left:1202px;top:227.4px;width:38.6px;height:70px;background:#535353"></div>
<div class="a" style="left:1202px;top:299px;width:38.6px;height:69.8px;background:#535353"></div>
<div class="a" style="left:1202px;top:370.8px;width:38.6px;height:41px;background:#535353"></div>
<div class="a" style="left:1202px;top:413.5px;width:38.6px;height:40.8px;background:#535353"></div>
<div class="a" style="left:1202px;top:456px;width:38.6px;height:40.8px;background:#535353"></div>
<div class="a" style="left:1202px;top:499px;width:38.6px;height:409.5px;background:#535353"></div>
<svg style="left:0;top:0" width="1500" height="910">
 <defs><pattern id="grip" width="2" height="4" patternUnits="userSpaceOnUse"><rect width="1.1" height="4" fill="#444"/><rect x="1.1" width="0.9" height="4" fill="#4d4d4d"/></pattern></defs>
 <g fill="url(#grip)">
  <rect x="1211" y="73" width="21" height="4"/><rect x="1211" y="115.5" width="21" height="4"/><rect x="1211" y="187.3" width="21" height="4"/>
  <rect x="1211" y="230.7" width="21" height="4"/><rect x="1211" y="302.3" width="21" height="4"/><rect x="1211" y="374" width="21" height="4"/>
  <rect x="1211" y="416.8" width="21" height="4"/><rect x="1211" y="459.3" width="21" height="4"/>
 </g>
 <!-- play -->
 <path d="M1215.5 87.5v13.5l13.5-6.8z" fill="#e6e6e6"/>
 <g fill="#e2e2e2">
  <!-- brush presets -->
  <circle cx="1213" cy="128" r="1"/><circle cx="1213" cy="131" r="1"/><circle cx="1213" cy="134" r="1"/>
  <rect x="1215" y="127.3" width="4.5" height="1.3"/><rect x="1215" y="130.3" width="4.5" height="1.3"/><rect x="1215" y="133.3" width="4.5" height="1.3"/>
  <path d="M1232.5 129.3l-8.5 8.8 2.3 1.7 7.2-9.5c.3-.8-.5-1.3-1-1z"/>
  <path d="M1215.5 144.5c.7-2.5 2-5 5-5.3 2-.2 3 2 1.8 3.5-1.8 2-4.5 1.8-6.8 1.8z"/>
  <!-- brush settings -->
  <path d="M1210 160.8c2-2.5 5-3.5 8-3l2 1v4l-2 1c-3 .5-6-.5-8-3z"/>
  <rect x="1221" y="159.8" width="10" height="1.7"/><rect x="1212.5" y="167.8" width="10" height="1.7"/>
  <path d="M1223.5 168.5l6.5-5.5c2 1.5 3 3.5 3 5.5s-1 4-3 5.5z"/>
  <!-- clone source -->
  <circle cx="1213" cy="200" r="1"/><circle cx="1213" cy="203" r="1"/><circle cx="1213" cy="206" r="1"/>
  <rect x="1215" y="199.3" width="4.5" height="1.3"/><rect x="1215" y="202.3" width="4.5" height="1.3"/><rect x="1215" y="205.3" width="4.5" height="1.3"/>
  <circle cx="1223.8" cy="202.5" r="3.1"/><rect x="1222.5" y="203.5" width="2.6" height="5"/>
  <path d="M1217 215h14v-4.5c0-1.5-1-2-2.5-2h-9c-1.5 0-2.5.5-2.5 2z"/><rect x="1217" y="216" width="14" height="1.4"/>
  <!-- para styles small squares -->
  <rect x="1215.5" y="326" width="6.5" height="6.5" fill="#d0d0d0"/><rect x="1211.8" y="322.3" width="6.5" height="6.5"/>
  <rect x="1215.5" y="355" width="6.5" height="6.5" fill="#d0d0d0"/><rect x="1211.8" y="351.3" width="6.5" height="6.5"/>
 </g>
 <g fill="none" stroke="#e2e2e2" stroke-width="1.4">
  <rect x="1212.8" y="323.3" width="4.5" height="4.5" stroke="#333" stroke-width="1"/>
  <rect x="1212.8" y="352.3" width="4.5" height="4.5" stroke="#333" stroke-width="1"/>
  <path d="M1227.3 242.3v13.5" stroke-width="1.3"/>
  <!-- cube -->
  <path d="M1222 384.5l8 4.5v9.5l-8 4.5-8-4.5v-9.5z" stroke-width="1.3"/>
  <path d="M1214 389l8 4.5 8-4.5M1222 393.5v9.5" stroke-width="1.1"/>
 </g>
 <path d="M1214 389l8 4.5v9.5l-8-4.5z" fill="#777"/>
 <path d="M1214 389l8-4.5 8 4.5-8 4.5z" fill="#5a5a5a"/>
 <path d="M1222 384.5l8 4.5v9.5l-8 4.5-8-4.5v-9.5zM1214 389l8 4.5 8-4.5M1222 393.5v9.5" fill="none" stroke="#e2e2e2" stroke-width="1.2"/>
 <g font-family="Liberation Sans" fill="#e4e4e4">
  <text x="1212.3" y="255.6" font-size="17">A</text>
  <text x="1214.8" y="287.2" font-size="19" font-weight="bold">&#182;</text>
  <text x="1217" y="326" font-size="19" font-weight="bold">&#182;</text>
  <text x="1219.2" y="353.8" font-size="15.5">A</text>
 </g>
 <text x="1213.5" y="487" font-family="Liberation Serif" font-style="italic" font-size="19" fill="#e4e4e4">A</text>
 <path d="M1214 486.5c2.5 1 5-.5 6.5-3" fill="none" stroke="#e4e4e4" stroke-width="1.2"/>
 <!-- grid (timeline) -->
 <rect x="1213" y="429" width="18" height="14" fill="#e6e6e6"/>
 <g fill="#535353"><rect x="1215" y="432.5" width="14" height="1"/><rect x="1215" y="438.5" width="14" height="1"/><rect x="1218.5" y="431" width="1.2" height="10"/><rect x="1224.5" y="431" width="1.2" height="10"/></g>
</svg>
<!-- properties panel -->
<div class="a" style="left:1243.5px;top:69.3px;width:256.5px;height:28.5px;background:#434343"></div>
<div class="a" style="left:1279.6px;top:69.3px;width:1px;height:28.5px;background:#3a3a3a"></div>
<div class="a" style="left:1314.8px;top:69.3px;width:1px;height:28.5px;background:#3a3a3a"></div>
<div class="a" style="left:1350px;top:69.3px;width:1px;height:28.5px;background:#3a3a3a"></div>
<div class="a" style="left:1386.2px;top:69.3px;width:73.5px;height:28.5px;background:#535353"></div>
<div class="a" style="left:1243.5px;top:97.8px;width:256.5px;height:35px;background:#535353"></div>
<div class="a" style="left:1243.5px;top:133px;width:256.5px;height:1.3px;background:#3e3e3e"></div>
<div class="a" style="left:1243.5px;top:134.3px;width:240px;height:353px;background:#535353"></div>
<div class="a" style="left:1482.5px;top:134.3px;width:17.5px;height:326px;background:#4b4b4b"></div>
<div class="t" style="left:1253px;top:78.3px;font-size:10.8px;font-weight:bold;color:#c9c9c9">Libra</div>
<div class="t" style="left:1288.5px;top:78.3px;font-size:10.8px;font-weight:bold;color:#c9c9c9;width:26px;overflow:hidden">History</div>
<div class="t" style="left:1323.5px;top:78.3px;font-size:10.8px;font-weight:bold;color:#c9c9c9;width:26px;overflow:hidden">Navigator</div>
<div class="t" style="left:1359px;top:78.3px;font-size:10.8px;font-weight:bold;color:#c9c9c9;width:25px;overflow:hidden">Adjustments</div>
<div class="t" style="left:1394.5px;top:78.3px;font-size:10.8px;font-weight:bold;color:#f4f4f4">Properties</div>
<div class="t" style="left:1252px;top:111.5px;font-size:11px;color:#dedede">No Properties</div>
<svg style="left:0;top:0" width="1500" height="910">
 <g fill="#cfcfcf"><rect x="1483" y="78.5" width="11" height="1.1"/><rect x="1483" y="80.6" width="11" height="1.1"/><rect x="1483" y="82.7" width="11" height="1.1"/><rect x="1483" y="84.8" width="11" height="1.1"/><rect x="1483" y="86.9" width="11" height="1.1"/></g>
</svg>
<!-- layers panel -->
<div class="a" style="left:1243.5px;top:489.5px;width:256.5px;height:29.2px;background:#434343"></div>
<div class="a" style="left:1298px;top:489.5px;width:53px;height:29.2px;background:#535353"></div>
<div class="a" style="left:1413.8px;top:489.5px;width:1px;height:29.2px;background:#3a3a3a"></div>
<div class="a" style="left:1460.3px;top:489.5px;width:1px;height:29.2px;background:#3a3a3a"></div>
<div class="t" style="left:1253px;top:499px;font-size:10.8px;font-weight:bold;color:#c9c9c9">History</div>
<div class="t" style="left:1306px;top:499px;font-size:10.8px;font-weight:bold;color:#f4f4f4">Layers</div>
<div class="t" style="left:1360px;top:499px;font-size:10.8px;font-weight:bold;color:#c9c9c9">Channels</div>
<div class="t" style="left:1423px;top:499px;font-size:10.8px;font-weight:bold;color:#c9c9c9">Paths</div>
<div class="a" style="left:1243.5px;top:518.7px;width:256.5px;height:390px;background:#535353"></div>
<svg style="left:0;top:0" width="1500" height="910">
 <g fill="#cfcfcf"><rect x="1483" y="498.5" width="11" height="1.1"/><rect x="1483" y="500.6" width="11" height="1.1"/><rect x="1483" y="502.7" width="11" height="1.1"/><rect x="1483" y="504.8" width="11" height="1.1"/><rect x="1483" y="506.9" width="11" height="1.1"/></g>
</svg>
<div class="a" style="left:1243.5px;top:551.8px;width:256.5px;height:1px;background:#484848"></div>
<div class="a" style="left:1243.5px;top:580.8px;width:256.5px;height:1px;background:#484848"></div>
<!-- kind field -->
<div class="a" style="left:1248px;top:528.5px;width:90.5px;height:18.5px;background:#4b4b4b;border:1px solid #5e5e5e;border-radius:3px"></div>
<div class="t" style="left:1269.5px;top:532.5px;font-size:11px;color:#8c8c8c">Kind</div>
<!-- normal -->
<div class="a" style="left:1248px;top:558px;width:135px;height:18px;background:#454545;border:1px solid #606060;border-radius:3px"></div>
<div class="t" style="left:1255.5px;top:561.5px;font-size:11px;color:#f0f0f0">Normal</div>
<div class="t" style="left:1386.5px;top:561.5px;font-size:11px;color:#e2e2e2">Opacity:</div>
<div class="a" style="left:1431.5px;top:558px;width:53px;height:18px;background:#454545;border:1px solid #606060;border-radius:3px"></div>
<div class="a" style="left:1469.5px;top:559px;width:1px;height:16px;background:#585858"></div>
<div class="t" style="left:1434.5px;top:561.5px;font-size:11px;color:#f0f0f0">100%</div>
<div class="t" style="left:1249px;top:590.5px;font-size:11px;color:#8e8e8e">Lock:</div>
<div class="t" style="left:1411px;top:590.5px;font-size:11px;color:#e2e2e2">Fill:</div>
<div class="a" style="left:1431.5px;top:587.5px;width:53px;height:17.5px;background:#454545;border:1px solid #606060;border-radius:3px"></div>
<div class="a" style="left:1469.5px;top:588.5px;width:1px;height:15.5px;background:#585858"></div>
<div class="t" style="left:1434.5px;top:590.5px;font-size:11px;color:#f0f0f0">100%</div>
<!-- layer rows -->
<div class="a" style="left:1243.5px;top:612.3px;width:240px;height:1px;background:#4a4a4a"></div>
<div class="a" style="left:1275.8px;top:612.5px;width:207.7px;height:42.3px;background:#6a6a6a"></div>
<div class="a" style="left:1243.5px;top:654.8px;width:240px;height:1px;background:#494949"></div>
<div class="a" style="left:1274.3px;top:612.5px;width:1px;height:247px;background:#4a4a4a"></div>
<div class="a" style="left:1472px;top:656px;width:11.5px;height:42px;background:#4b4b4b"></div>
<div class="a" style="left:1243.5px;top:816.8px;width:240px;height:1px;background:#4a4a4a"></div>
<div class="a" style="left:1243.5px;top:859.6px;width:240px;height:1px;background:#4a4a4a"></div>
<div class="a" style="left:1483.5px;top:612.5px;width:16.5px;height:269.7px;background:#4b4b4b"></div>
<div class="a" style="left:1243.5px;top:882.2px;width:256.5px;height:1.2px;background:#424242"></div>
<div class="t" style="left:1310.7px;top:629px;font-size:11px;color:#f2f2f2;letter-spacing:0.13px">Watercolor paper</div>
<div class="t" style="left:1310.7px;top:672px;font-size:11px;color:#f2f2f2;letter-spacing:0.08px">Background copy</div>
<div class="t" style="left:1344px;top:711px;font-size:11px;color:#f2f2f2;letter-spacing:0.15px">Smart Filters</div>
<div class="t" style="left:1331.4px;top:741px;font-size:11px;color:#f2f2f2">Find Edges</div>
<div class="t" style="left:1331.4px;top:761px;font-size:11px;color:#f2f2f2">Smart Blur</div>
<div class="t" style="left:1331.4px;top:780.5px;font-size:11px;color:#f2f2f2">Filter Gallery</div>
<div class="t" style="left:1331.4px;top:800.5px;font-size:11px;color:#f2f2f2">Filter Gallery</div>
<div class="t" style="left:1310.6px;top:833.2px;font-size:11px;color:#f2f2f2">Background</div>
<svg style="left:0;top:0" width="1500" height="910">
 <defs>
  <g id="eye"><path d="M-6.7 0c3.7-5.5 9.7-5.5 13.4 0-3.7 5.5-9.7 5.5-13.4 0z" fill="#f0f0f0"/><circle r="2.8" fill="#535353"/><circle r="1.3" cx="0" cy="0" fill="#2d2d2d"/></g>
  <g id="fopt"><g fill="#e6e6e6"><rect x="0.3" y="0" width="12.2" height="1.2"/><rect x="0.3" y="4.9" width="12.2" height="1.2"/><path d="M3.2 4.2l2.3-2.6 2.3 2.6z"/><path d="M6.4 9.3l2.4-2.7 2.4 2.7z"/><rect x="6.2" y="9" width="5.2" height="0.9"/></g></g>
  <linearGradient id="ppr" x1="0" y1="0" x2="1" y2="1"><stop offset="0" stop-color="#dcdcdc"/><stop offset="1" stop-color="#f4f4f4"/></linearGradient>
  <radialGradient id="fl" cx="0.55" cy="0.35" r="0.6"><stop offset="0" stop-color="#e04a7a"/><stop offset="0.35" stop-color="#c43a64"/><stop offset="0.7" stop-color="#6a4a55"/><stop offset="1" stop-color="#8a7a80"/></radialGradient>
 </defs>
 <use href="#eye" x="1259.6" y="634.3"/>
 <use href="#eye" x="1259.6" y="677.2"/>
 <use href="#eye" x="1302.3" y="716.5"/>
 <use href="#eye" x="1320" y="746.5"/>
 <use href="#eye" x="1320" y="766.5"/>
 <use href="#eye" x="1320" y="786"/>
 <use href="#eye" x="1320" y="806"/>
 <use href="#eye" x="1259.8" y="838.5"/>
 <!-- watercolor thumb -->
 <rect x="1278.9" y="617.1" width="24.3" height="34.4" fill="#2a2a2a"/>
 <rect x="1280.6" y="618.8" width="20.9" height="31" fill="url(#ppr)"/>
 <path d="M1277.7 625v-8.9h8.5M1295.5 616.1h8.5v8.9M1304 643.5v9h-8.5M1286.2 652.5h-8.5v-9" fill="none" stroke="#f4f4f4" stroke-width="1.3"/>
 <!-- bg copy thumb -->
 <rect x="1279.4" y="660.8" width="22.3" height="32.6" fill="#262626"/>
 <rect x="1280.4" y="661.8" width="20.3" height="30.6" fill="#3a3134"/>
 <path d="M1280.4 661.8h6c-1 6-1.5 14-.5 30.6h-5.5z" fill="#8c7c82"/>
 <path d="M1286 661.8h10l3 3c-3 0-8 1-13 3z" fill="#6a5a60"/>
 <path d="M1291 664.5l1.6 4.2 4.3-1.5-2.8 3.5 3.6 2.3-4.4.3.3 4.5-2.6-3.6-2.6 3.6.3-4.5-4.4-.3 3.6-2.3-2.8-3.5 4.3 1.5z" fill="#e24a78"/>
 <circle cx="1291" cy="671" r="1.5" fill="#f4a0c0"/>
 <path d="M1284.5 679.5l1.2 3 3-.8-2 2.3 2.5 1.8-3.1.2.2 3.2-1.8-2.6-1.8 2.6.2-3.2-3.1-.2 2.5-1.8-2-2.3 3 .8z" fill="#c83a64"/>
 <circle cx="1297.5" cy="676" r="2" fill="#a02a4a"/>
 <path d="M1288 677l3-2 2 2-3 1z" fill="#3a6a2a"/>
 <rect x="1286.6" y="678.5" width="15" height="14.5" fill="#353535"/>
 <path d="M1290.3 681h3.2v6h-3.2zM1295 681h1.8l2.6 2.6v6.6h-4.4v-2.5h2v-2.5h-2zM1288.6 687.6h5v3.8h-5z" fill="#f4f4f4"/>
 <!-- smart filter icon and chevron -->
 <g fill="none" stroke="#cfcfcf" stroke-width="1.1"><circle cx="1460.5" cy="679" r="4.4"/><circle cx="1464" cy="675.8" r="4.2"/></g>
 <path d="M1474.5 678l2.8-2.8 2.8 2.8" fill="none" stroke="#e0e0e0" stroke-width="1.2"/>
 <!-- smart filters thumb -->
 <rect x="1312.3" y="702" width="23.4" height="33.6" rx="1.5" fill="#2c2c2c"/>
 <rect x="1313.5" y="703.2" width="21" height="31.2" rx="1" fill="#fafafa"/>
 <use href="#fopt" x="1458.6" y="743.8"/>
 <use href="#fopt" x="1458.6" y="763.8"/>
 <use href="#fopt" x="1458.6" y="783.3"/>
 <use href="#fopt" x="1458.6" y="803.3"/>
 <!-- background thumb -->
 <rect x="1279.6" y="822.4" width="22.1" height="32.2" fill="#262626"/>
 <rect x="1280.5" y="823.3" width="20.3" height="30.4" fill="#3a3134"/>
 <path d="M1280.5 823.3h5.5c-1 6-1.5 14-.5 30.4h-5z" fill="#8c7c82"/>
 <path d="M1285.5 823.3h10l5 3c-3 0-8 1-15 3z" fill="#6a5a60"/>
 <path d="M1290 824.8l1.5 4 4.2-1.4-2.7 3.4 3.5 2.2-4.3.3.3 4.4-2.5-3.5-2.5 3.5.3-4.4-4.3-.3 3.5-2.2-2.7-3.4 4.2 1.4z" fill="#e24a78"/>
 <path d="M1287.5 836l1.4 3.6 3.8-1.3-2.4 3 3.1 2-3.9.3.3 4-2.3-3.2-2.3 3.2.3-4-3.9-.3 3.1-2-2.4-3 3.8 1.3z" fill="#d43e6c"/>
 <path d="M1292 842c3 1 6 5 7 11.5h-5c-1-4-2-8-2-11.5z" fill="#3d6a30"/>
 <circle cx="1297" cy="836" r="1.8" fill="#a02a4a"/>
 <!-- lock -->
 <rect x="1455.3" y="838.5" width="11.2" height="7.5" rx="1" fill="none" stroke="#e0e0e0" stroke-width="1.2"/>
 <path d="M1457.8 838.5v-2.5c0-4.2 6.2-4.2 6.2 0v2.5" fill="none" stroke="#e0e0e0" stroke-width="1.2"/>
 <rect x="1460" y="841" width="1.8" height="2" fill="#e0e0e0"/>
 <!-- footer icons -->
 <g fill="none" stroke="#9a9a9a" stroke-width="1.3">
  <path d="M1293 891.8h-2.3a3.2 3.2 0 0 0 0 6.4h2.3M1297 891.8h2.3a3.2 3.2 0 0 1 0 6.4h-2.3M1291.5 895h7" stroke-width="1.4"/>
  <circle cx="1380" cy="895" r="5.5"/>
  <rect x="1430.5" y="889" width="11.5" height="12"/><path d="M1436.3 892v6M1433.3 895h6"/>
  <path d="M1459.5 891h11M1461 891v10.5h8V891M1463 889h4M1463.8 893v6.5M1466.2 893v6.5"/>
 </g>
 <path d="M1380 889.5a5.5 5.5 0 0 1 0 11z" fill="#9a9a9a" transform="rotate(45 1380 895)"/>
 <text x="1317.5" y="900" font-family="Liberation Serif" font-style="italic" font-size="14" fill="#8c8c8c">fx</text>
 <rect x="1345" y="889.5" width="13.5" height="11" fill="#9a9a9a"/><circle cx="1351.7" cy="895" r="3.3" fill="#535353"/>
 <path d="M1401 891h5l1.5 1.5h6.5v8.5h-13z" fill="#9a9a9a"/>
 <!-- kind row icons -->
 <g fill="none" stroke="#a8a8a8" stroke-width="1.1">
  <circle cx="1261.3" cy="536.3" r="3.8" stroke-width="1.4"/><path d="M1264.2 539.2l3 3" stroke-width="1.8"/>
  <path d="M1327.5 536.5l2.5 2.5 2.5-2.5" stroke="#6a6a6a"/>
  <rect x="1351" y="532.5" width="12" height="9.5"/>
  <circle cx="1382" cy="537.5" r="5"/>
  <path d="M1402.2 533v-1.5h10v1.5M1407.2 531.5v11M1405 542.5h4.5" stroke-width="1.3"/>
  <rect x="1427.5" y="532" width="10" height="10"/>
  <path d="M1454 531.5h5l3 3v8h-8z"/>
 </g>
 <path d="M1352.5 540.5l3-3.5 2 2 1.5-1.5 2.5 3z" fill="#a8a8a8"/>
 <path d="M1382 532.5a5 5 0 0 1 0 10z" fill="#a8a8a8" transform="rotate(45 1382 537.5)"/>
 <g fill="#a8a8a8"><rect x="1426" y="530.5" width="3" height="3"/><rect x="1436" y="530.5" width="3" height="3"/><rect x="1426" y="540.5" width="3" height="3"/><rect x="1436" y="540.5" width="3" height="3"/></g>
 <rect x="1452.5" y="537.5" width="5.5" height="6" fill="#a8a8a8"/>
 <rect x="1476.5" y="529" width="8" height="18" rx="4" fill="#4a4a4a"/>
 <circle cx="1480.5" cy="533.2" r="4" fill="#9c9c9c"/>
 <!-- normal / opacity chevrons -->
 <g fill="none" stroke="#e6e6e6" stroke-width="1.2"><path d="M1372 566l2.8 2.8 2.8-2.8M1474.3 566l2.8 2.8 2.8-2.8M1474.3 595.2l2.8 2.8 2.8-2.8"/></g>
 <!-- lock icons -->
 <g fill="#9a9a9a">
  <rect x="1283.5" y="590.3" width="11" height="11" fill="none" stroke="#9a9a9a" stroke-width="1"/>
  <rect x="1285" y="591.8" width="2.7" height="2.7"/><rect x="1290.4" y="591.8" width="2.7" height="2.7"/><rect x="1287.7" y="594.5" width="2.7" height="2.7"/><rect x="1285" y="597.2" width="2.7" height="2.7"/><rect x="1290.4" y="597.2" width="2.7" height="2.7"/>
  <path d="M1318.5 590l-6 8 1.5 1.2 5.5-8.5c.2-.6-.5-1-1-.7z"/><path d="M1306.5 604c.5-2 1.5-4 3.8-4.3 1.5-.1 2.3 1.5 1.3 2.7-1.3 1.5-3.3 1.6-5.1 1.6z"/>
  <path d="M1376 595.5h8.5v7.5h-8.5z"/>
 </g>
 <g fill="none" stroke="#9a9a9a" stroke-width="1.1">
  <path d="M1333.5 589.5v12M1327.5 595.5h12M1331.5 591.5l2-2 2 2M1331.5 599.5l2 2 2-2M1329.5 593.5l-2 2 2 2M1337.5 593.5l2 2-2 2"/>
  <path d="M1350.5 591.5h10.5l2 2v9M1353 591.5v9.5h9.5" stroke-dasharray="1.6 1"/>
  <path d="M1377.5 595.5v-2c0-3.5 5.5-3.5 5.5 0v2" stroke-width="1.3"/>
 </g>
</svg>
</body></html>
